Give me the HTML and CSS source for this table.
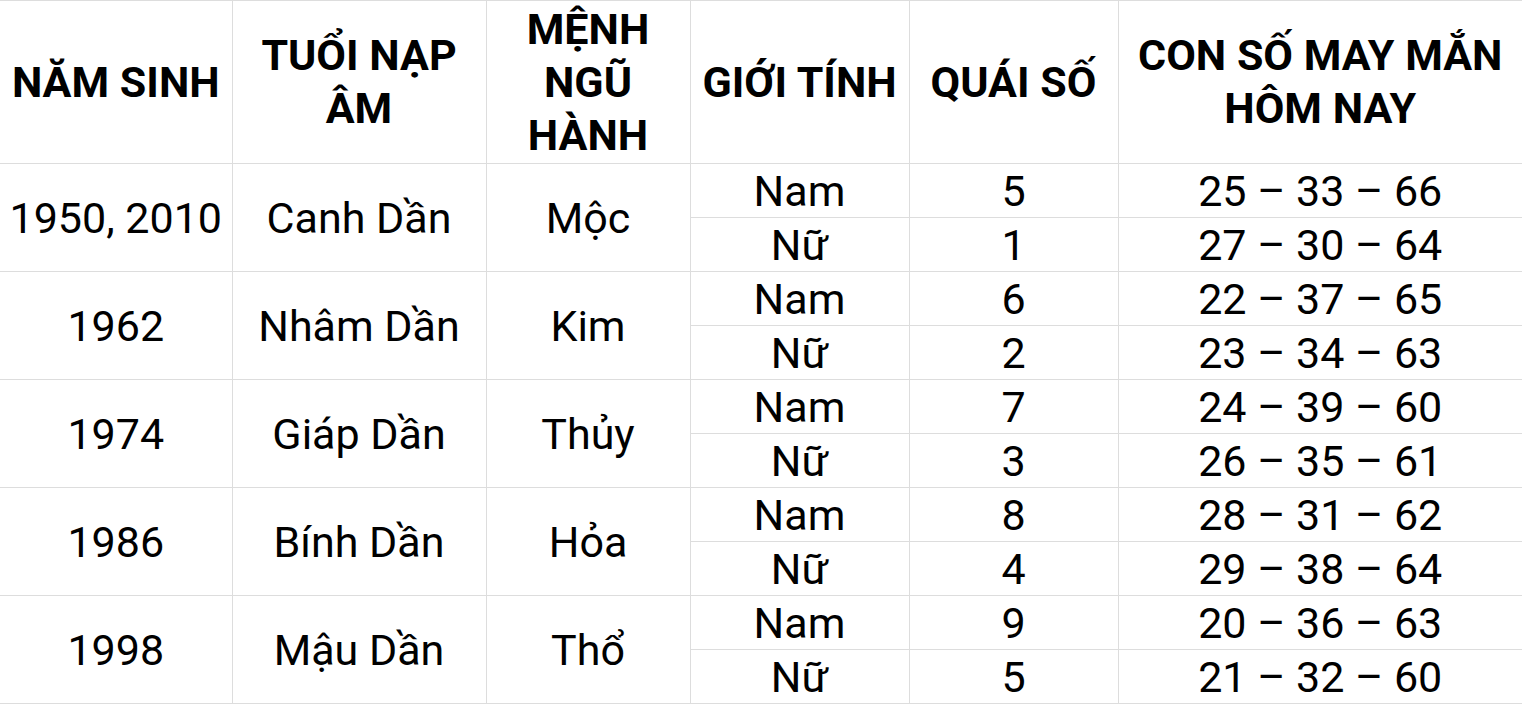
FILE: index.html
```html
<!DOCTYPE html>
<html lang="vi">
<head>
<meta charset="utf-8">
<title>Con số may mắn</title>
<link rel="stylesheet" href="styles.css">
</head>
<body>
<table class="lucky">
  <colgroup>
    <col class="c1"><col class="c2"><col class="c3"><col class="c4"><col class="c5"><col class="c6">
  </colgroup>
  <thead>
    <tr class="head">
      <th>NĂM SINH</th>
      <th>TUỔI NẠP<br>ÂM</th>
      <th>MỆNH<br>NGŨ<br>HÀNH</th>
      <th>GIỚI TÍNH</th>
      <th>QUÁI SỐ</th>
      <th>CON SỐ MAY MẮN<br>HÔM NAY</th>
    </tr>
  </thead>
  <tbody>
    <tr><td rowspan="2">1950, 2010</td><td rowspan="2">Canh Dần</td><td rowspan="2">Mộc</td><td>Nam</td><td>5</td><td>25 – 33 – 66</td></tr>
    <tr><td>Nữ</td><td>1</td><td>27 – 30 – 64</td></tr>
    <tr><td rowspan="2">1962</td><td rowspan="2">Nhâm Dần</td><td rowspan="2">Kim</td><td>Nam</td><td>6</td><td>22 – 37 – 65</td></tr>
    <tr><td>Nữ</td><td>2</td><td>23 – 34 – 63</td></tr>
    <tr><td rowspan="2">1974</td><td rowspan="2">Giáp Dần</td><td rowspan="2">Thủy</td><td>Nam</td><td>7</td><td>24 – 39 – 60</td></tr>
    <tr><td>Nữ</td><td>3</td><td>26 – 35 – 61</td></tr>
    <tr><td rowspan="2">1986</td><td rowspan="2">Bính Dần</td><td rowspan="2">Hỏa</td><td>Nam</td><td>8</td><td>28 – 31 – 62</td></tr>
    <tr><td>Nữ</td><td>4</td><td>29 – 38 – 64</td></tr>
    <tr><td rowspan="2">1998</td><td rowspan="2">Mậu Dần</td><td rowspan="2">Thổ</td><td>Nam</td><td>9</td><td>20 – 36 – 63</td></tr>
    <tr><td>Nữ</td><td>5</td><td>21 – 32 – 60</td></tr>
  </tbody>
</table>
</body>
</html>
```
FILE: styles.css
```css
html, body {
  margin: 0;
  padding: 0;
  background: #fff;
}
body {
  font-family: Roboto, "Liberation Sans", sans-serif;
  color: #000;
  overflow: hidden;
}
.lucky {
  border-collapse: collapse;
  table-layout: fixed;
  width: 1522px;
}
.c1 { width: 232px; }
.c2 { width: 254px; }
.c3 { width: 204px; }
.c4 { width: 219px; }
.c5 { width: 209px; }
.c6 { width: 404px; }
.lucky th,
.lucky td {
  border: 1px solid #dddddd;
  padding: 0;
  text-align: center;
  vertical-align: middle;
  font-size: 43px;
  white-space: nowrap;
}
.lucky th {
  font-weight: 700;
  line-height: 53px;
}
.lucky td {
  font-weight: 400;
  line-height: 50px;
}
.lucky tr > :first-child { border-left: none; }
.lucky tr > :last-child { border-right: none; }
.head { height: 163px; }
.lucky tbody tr { height: 54px; }
```
